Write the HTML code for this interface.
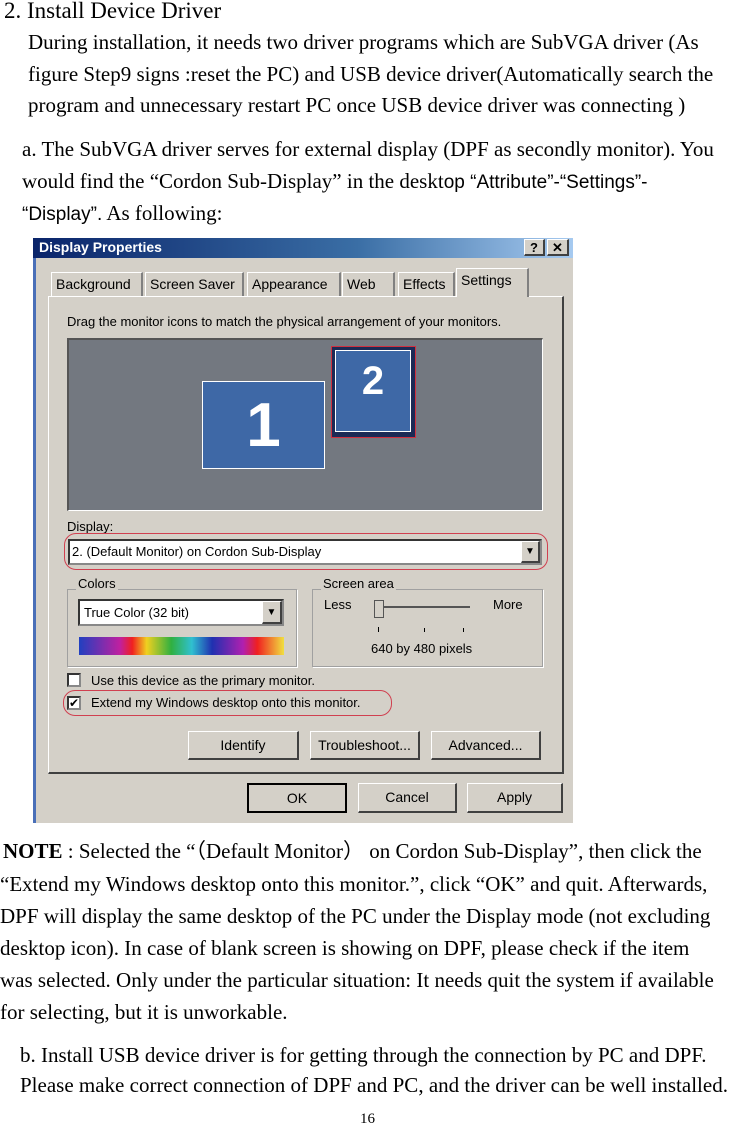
<!DOCTYPE html>
<html><head><meta charset="utf-8"><style>
body{margin:0;width:733px;height:1126px;background:#fff;position:relative;overflow:hidden;font-family:"Liberation Serif",serif;color:#000}
.l{position:absolute;white-space:nowrap;font-size:21px;line-height:22px}
.d{position:absolute;font-family:"Liberation Sans",sans-serif;font-size:13px;color:#000;white-space:nowrap}
.a{position:absolute}
.btn{position:absolute;background:#d4d0c8;border-top:1px solid #fff;border-left:1px solid #fff;border-right:2px solid #404040;border-bottom:2px solid #404040;box-sizing:border-box;font-family:"Liberation Sans",sans-serif;font-size:14px;text-align:center;line-height:26px}
.grp{position:absolute;border:1px solid #a0a0a0;box-shadow:1px 1px 0 #fff;box-sizing:border-box}
.tab{position:absolute;top:272px;height:24px;border:1px solid #fff;border-bottom:none;border-right:2px solid #808080;box-sizing:border-box;font-family:"Liberation Sans",sans-serif;font-size:14px;line-height:22px;padding:0 4px;color:#000}
</style></head><body>
<div class="l" style="left:4px;top:-1px;font-size:23px;line-height:23px">2. Install Device Driver</div>
<div class="l" style="left:28px;top:31px">During installation, it needs two driver programs which are SubVGA driver (As</div>
<div class="l" style="left:28px;top:63px">figure Step9 signs :reset the PC) and USB device driver(Automatically search the</div>
<div class="l" style="left:28px;top:94px">program and unnecessary restart PC once USB device driver was connecting )</div>
<div class="l" style="left:22px;top:138px">a. The SubVGA driver serves for external display (DPF as secondly monitor). You</div>
<div class="l" style="left:22px;top:170px">would find the “Cordon Sub-Display” in the deskt<span style="font-family:'Liberation Sans',sans-serif;font-size:19px">op “Attribute”-“Settings”-</span></div>
<div class="l" style="left:22px;top:202px"><span style="font-family:'Liberation Sans',sans-serif;font-size:19px">“Display”.</span> As following:</div>

<div class="a" style="left:33px;top:238px;width:540px;height:585px;background:#d4d0c8;border-left:3px solid #4a6fb8;box-sizing:border-box"></div>
<div class="a" style="left:33px;top:238px;width:540px;height:20px;background:linear-gradient(90deg,#0a246a,#3a6ea5 60%,#a6caf0)"></div>
<div class="d" style="left:39px;top:239px;color:#fff;font-weight:bold;font-size:14px">Display Properties</div>
<div class="btn" style="left:524px;top:239px;width:21px;height:17px;line-height:15px;font-weight:bold;font-size:13px">?</div>
<div class="btn" style="left:547px;top:239px;width:22px;height:17px;line-height:15px;font-weight:bold;font-size:13px">✕</div>
<div class="tab" style="left:51px;width:92px">Background</div>
<div class="tab" style="left:145px;width:99px">Screen Saver</div>
<div class="tab" style="left:247px;width:94px">Appearance</div>
<div class="tab" style="left:342px;width:53px">Web</div>
<div class="tab" style="left:398px;width:57px">Effects</div>
<div class="tab" style="left:456px;top:268px;height:29px;width:73px;background:#d4d0c8;z-index:2">Settings</div>
<div class="a" style="left:48px;top:296px;width:516px;height:478px;border-top:1px solid #fff;border-left:1px solid #fff;border-right:2px solid #404040;border-bottom:2px solid #404040;box-sizing:border-box"></div>
<div class="d" style="left:67px;top:314px">Drag the monitor icons to match the physical arrangement of your monitors.</div>
<div class="a" style="left:67px;top:338px;width:476px;height:173px;background:#737880;border-top:2px solid #555;border-left:2px solid #555;border-right:1px solid #fff;border-bottom:1px solid #fff;box-sizing:border-box"></div>
<div class="a" style="left:202px;top:381px;width:123px;height:88px;background:#3e68a6;border:1px solid #fff;box-sizing:border-box;color:#fff;font:bold 62px 'Liberation Sans',sans-serif;text-align:center;line-height:88px">1</div>
<div class="a" style="left:331px;top:346px;width:85px;height:92px;background:#1c2a55;border:1px solid #d03040;box-sizing:border-box"></div>
<div class="a" style="left:335px;top:350px;width:76px;height:82px;background:#3e68a6;border:1px solid #fff;box-sizing:border-box;color:#fff;font:bold 40px 'Liberation Sans',sans-serif;text-align:center;line-height:60px">2</div>
<div class="d" style="left:67px;top:519px">Display:</div>
<div class="a" style="left:64px;top:533px;width:484px;height:37px;border:1px solid #d04050;border-radius:12px;box-sizing:border-box"></div>
<div class="a" style="left:68px;top:539px;width:474px;height:26px;background:#fff;border:2px inset #888;box-sizing:border-box"></div>
<div class="d" style="left:72px;top:544px">2. (Default Monitor) on Cordon Sub-Display</div>
<div class="btn" style="left:521px;top:541px;width:19px;height:22px;line-height:20px;font-size:10px">▼</div>
<div class="grp" style="left:67px;top:589px;width:230px;height:78px"></div>
<div class="d" style="left:76px;top:576px;background:#d4d0c8;padding:0 2px">Colors</div>
<div class="a" style="left:78px;top:599px;width:206px;height:27px;background:#fff;border:2px inset #888;box-sizing:border-box"></div>
<div class="d" style="left:84px;top:605px">True Color (32 bit)</div>
<div class="btn" style="left:262px;top:601px;width:20px;height:23px;line-height:21px;font-size:10px">▼</div>
<div class="a" style="left:79px;top:637px;width:205px;height:18px;background:linear-gradient(90deg,#2040c0,#c020a0 20%,#f02020 26%,#f0d020 33%,#30b040 45%,#30c0d0 55%,#2030b0 65%,#b020b0 80%,#f02020 87%,#f0e040)"></div>
<div class="grp" style="left:312px;top:589px;width:231px;height:78px"></div>
<div class="d" style="left:321px;top:576px;background:#d4d0c8;padding:0 2px">Screen area</div>
<div class="d" style="left:324px;top:597px">Less</div>
<div class="d" style="left:493px;top:597px">More</div>
<div class="a" style="left:380px;top:606px;width:90px;height:2px;background:#555"></div>
<div class="a" style="left:374px;top:600px;width:10px;height:18px;background:#d4d0c8;border:1px solid #555;box-sizing:border-box"></div>
<div class="a" style="left:378px;top:627px;width:1px;height:5px;background:#000"></div>
<div class="a" style="left:424px;top:628px;width:1px;height:4px;background:#000"></div>
<div class="a" style="left:463px;top:628px;width:1px;height:4px;background:#000"></div>
<div class="d" style="left:371px;top:641px">640 by 480 pixels</div>
<div class="a" style="left:67px;top:673px;width:14px;height:14px;background:#fff;border:2px inset #888;box-sizing:border-box"></div>
<div class="d" style="left:91px;top:673px">Use this device as the primary monitor.</div>
<div class="a" style="left:63px;top:690px;width:329px;height:26px;border:1px solid #d04050;border-radius:12px;box-sizing:border-box"></div>
<div class="a" style="left:67px;top:696px;width:14px;height:14px;background:#fff;border:2px inset #888;box-sizing:border-box;font-size:12px;line-height:10px">✔</div>
<div class="d" style="left:91px;top:695px">Extend my Windows desktop onto this monitor.</div>
<div class="btn" style="left:188px;top:731px;width:111px;height:29px">Identify</div>
<div class="btn" style="left:310px;top:731px;width:110px;height:29px">Troubleshoot...</div>
<div class="btn" style="left:431px;top:731px;width:110px;height:29px">Advanced...</div>
<div class="btn" style="left:247px;top:783px;width:100px;height:30px;border:2px solid #000">OK</div>
<div class="btn" style="left:358px;top:783px;width:99px;height:30px">Cancel</div>
<div class="btn" style="left:467px;top:783px;width:96px;height:30px">Apply</div>

<div class="l" style="left:3px;top:840px"><b>NOTE</b> : Selected the “（Default Monitor）  on Cordon Sub-Display”, then click the</div>
<div class="l" style="left:0px;top:873px">“Extend my Windows desktop onto this monitor.”, click “OK” and quit. Afterwards,</div>
<div class="l" style="left:0px;top:905px">DPF will display the same desktop of the PC under the Display mode (not excluding</div>
<div class="l" style="left:0px;top:937px">desktop  icon). In case of blank screen is showing on DPF, please check if the item</div>
<div class="l" style="left:0px;top:969px">was selected. Only under the particular situation: It needs quit the system if available</div>
<div class="l" style="left:0px;top:1001px">for selecting, but it is unworkable.</div>
<div class="l" style="left:20px;top:1044px">b. Install USB device driver is for getting through the connection by PC and DPF.</div>
<div class="l" style="left:20px;top:1074px">Please make correct connection of DPF and PC, and the driver can be well installed.</div>
<div class="l" style="left:360px;top:1111px;font-size:15px;line-height:16px">16</div>
</body></html>
